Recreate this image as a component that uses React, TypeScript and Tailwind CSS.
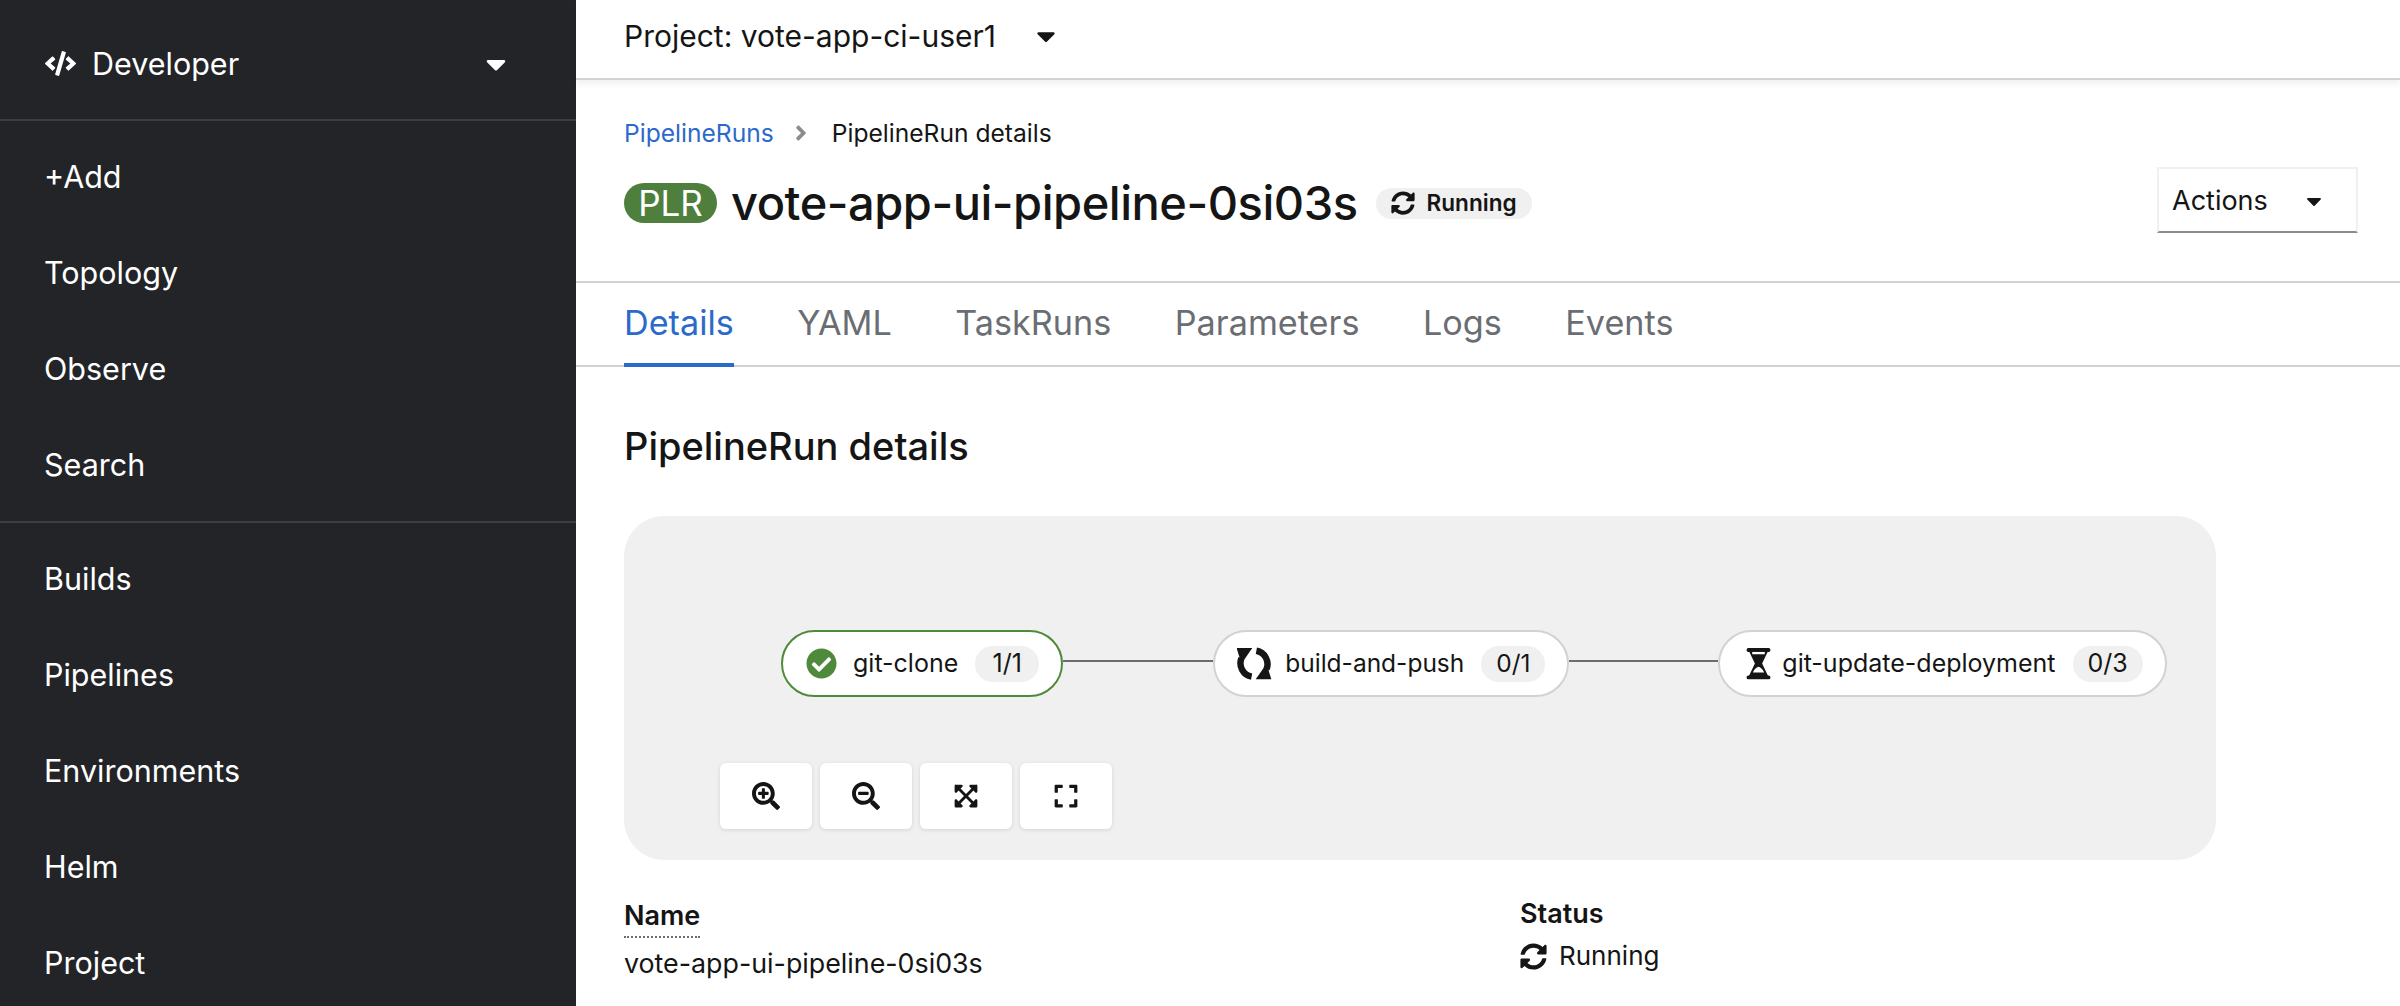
import React from "react";
import {
  FaCaretDown,
  FaAngleRight,
  FaCode,
  FaCheckCircle,
  FaSyncAlt,
  FaSearchPlus,
  FaSearchMinus,
  FaExpandArrowsAlt,
  FaExpand,
} from "react-icons/fa";

const navTop = ["+Add", "Topology", "Observe", "Search"];
const navBottom = ["Builds", "Pipelines", "Environments", "Helm", "Project"];
const tabs = ["Details", "YAML", "TaskRuns", "Parameters", "Logs", "Events"];

function SyncIcon() {
  return (
    <svg viewBox="17 25 103 93" className="h-[33px] w-[35px]" fill="#151515">
      <path d="M60 110A40 40 0 0 1 30 56" fill="none" stroke="#151515" strokeWidth="19" />
      <polygon points="16,26 62,26 30,72" />
      <path d="M74 34A40 40 0 0 1 104 88" fill="none" stroke="#151515" strokeWidth="19" />
      <polygon points="118,118 72,118 104,72" />
    </svg>
  );
}

function HourglassIcon() {
  return (
    <svg viewBox="30 22 78 100" className="h-[33px] w-[27px]">
      <rect x="33" y="25" width="72" height="12" rx="5" fill="#151515" />
      <rect x="33" y="108" width="72" height="12" rx="5" fill="#151515" />
      <polygon points="40,34 98,34 80,72 98,110 40,110 58,72" fill="#151515" />
      <rect x="50" y="37" width="38" height="7" fill="#fff" />
      <path d="M52 99C56 90 62 84 69 82C76 84 82 90 86 99Z" fill="#fff" />
    </svg>
  );
}

function Sidebar() {
  return (
    <aside className="w-[576px] shrink-0 bg-[#232428] text-white text-[30.5px]">
      <div className="flex h-[121px] items-center justify-between border-b-2 border-[#3c3f42] pl-[45px] pr-[64px] pt-[8px]">
        <div className="flex items-center gap-[16px]">
          <FaCode className="w-[31px] h-[31px]" />
          <span>Developer</span>
        </div>
        <FaCaretDown className="w-[32px] h-[32px]" />
      </div>
      <div className="border-b-2 border-[#3c3f42] pt-[8px] pb-[8px]">
        {navTop.map((n) => (
          <div key={n} className="flex h-[96px] items-center pl-[44px]">
            {n}
          </div>
        ))}
      </div>
      <div className="pt-[8px]">
        {navBottom.map((n) => (
          <div key={n} className="flex h-[96px] items-center pl-[44px]">
            {n}
          </div>
        ))}
      </div>
    </aside>
  );
}

function PipelineNode({
  icon,
  label,
  count,
  done,
  iconClass,
  badgeClass,
  textClass,
}: {
  icon: React.ReactNode;
  label: string;
  count: string;
  done?: boolean;
  iconClass: string;
  badgeClass: string;
  textClass: string;
}) {
  return (
    <div
      className={[
        "flex h-[67px] items-center rounded-full border-2 bg-white pr-[22px] text-[#151515]",
        done ? "border-[#4f8a3c]" : "border-[#d2d2d2]",
        textClass,
      ].join(" ")}
    >
      <div className={["flex items-center", iconClass].join(" ")}>
        {icon}
        <span>{label}</span>
      </div>
      <span
        className={[
          "ml-[17px] flex h-[36px] items-center justify-center rounded-full bg-[#f0f0f0]",
          badgeClass,
        ].join(" ")}
      >
        {count}
      </span>
    </div>
  );
}

function ZoomButton({ children }: { children: React.ReactNode }) {
  return (
    <div className="flex h-[66px] w-[92px] items-center justify-center rounded-[6px] bg-white text-[#151515] shadow-[0_1px_4px_rgba(3,3,3,0.12)]">
      {children}
    </div>
  );
}

export default function App() {
  return (
    <div className="flex h-[1006px] w-[2400px] overflow-hidden bg-white font-['Inter',sans-serif] text-[#151515]">
      <Sidebar />
      <main className="flex-1">
        <div className="flex h-[80px] items-center border-b-2 border-[#d2d2d2] pb-[6px] pl-[48px] shadow-[0_4px_6px_rgba(3,3,3,0.06)] text-[30px]">
          <span>Project: vote-app-ci-user1</span>
          <FaCaretDown className="ml-[35px] w-[30px] h-[30px]" />
        </div>

        <div className="h-[203px] border-b-2 border-[#d2d2d2] pl-[48px] pr-[42px] pt-[38px]">
          <div className="flex items-center text-[24.6px] leading-[30px]">
            <span className="text-[#2b6acb]">PipelineRuns</span>
            <FaAngleRight className="mx-[15px] w-[24px] h-[24px] text-[#8a8d90]" />
            <span className="ml-[4px]">PipelineRun details</span>
          </div>
          <div className="mt-[20px] flex items-start justify-between">
            <div className="flex items-center pt-[7px]">
              <span className="flex h-[40px] w-[93px] items-center justify-center rounded-full bg-[#4f7f3c] text-[35px] leading-none text-white">
                PLR
              </span>
              <span className="ml-[14px] text-[47px] font-medium leading-[56px] tracking-[-0.01em]">
                vote-app-ui-pipeline-0si03s
              </span>
              <span className="ml-[18px] flex h-[31px] items-center rounded-full bg-[#f0f0f0] pl-[15px] pr-[15px] text-[22.6px] font-semibold">
                <FaSyncAlt className="mr-[12px] w-[24px] h-[24px]" />
                Running
              </span>
            </div>
            <div className="-mt-[1px] flex h-[66px] w-[201px] items-center border-2 border-[#f0f0f0] border-b-[#8a8d90] pl-[13px] pt-[2px] text-[27px]">
              Actions
              <FaCaretDown className="ml-[34px] w-[24px] h-[24px]" />
            </div>
          </div>
        </div>

        <div className="flex h-[84px] gap-[63.5px] border-b-2 border-[#d2d2d2] pl-[48px] text-[34.2px] text-[#6a6e73]">
          {tabs.map((t, i) => (
            <div
              key={t}
              className={[
                "flex items-center border-b-4 -mb-[2px]",
                i === 0 ? "border-[#2b6acb] text-[#2b6acb]" : "border-transparent",
              ].join(" ")}
            >
              {t}
            </div>
          ))}
        </div>

        <div className="pl-[48px]">
          <h2 className="pt-[54px] text-[38px] font-medium leading-[50px]">PipelineRun details</h2>

          <div className="mt-[45px] h-[344px] w-[1592px] rounded-[40px] bg-[#f0f0f0] pl-[96px] pt-[114px]">
            <div className="ml-[61px] flex items-start">
              <PipelineNode
                done
                iconClass="pl-[23px] gap-[16px]"
                badgeClass="w-[64px]"
                textClass="text-[25px]"
                icon={<FaCheckCircle className="w-[31px] h-[31px] text-[#4f8a3c]" />}
                label="git-clone"
                count="1/1"
              />
              <div className="mt-[30px] h-[2px] w-[150px] bg-[#6a6e73]" />
              <PipelineNode
                iconClass="pl-[22px] gap-[13px]"
                badgeClass="w-[64px]"
                textClass="text-[24.5px]"
                icon={<SyncIcon />}
                label="build-and-push"
                count="0/1"
              />
              <div className="mt-[30px] h-[2px] w-[149px] bg-[#6a6e73]" />
              <PipelineNode
                iconClass="pl-[25px] gap-[10px]"
                badgeClass="w-[70px]"
                textClass="text-[25px]"
                icon={<HourglassIcon />}
                label="git-update-deployment"
                count="0/3"
              />
            </div>
            <div className="mt-[66px] flex gap-[8px]">
              <ZoomButton><FaSearchPlus className="w-[28px] h-[28px]" /></ZoomButton>
              <ZoomButton><FaSearchMinus className="w-[28px] h-[28px]" /></ZoomButton>
              <ZoomButton><FaExpandArrowsAlt className="w-[26px] h-[26px]" /></ZoomButton>
              <ZoomButton><FaExpand className="w-[26px] h-[26px]" /></ZoomButton>
            </div>
          </div>

          <div className="mt-[38px] flex text-[26px]">
            <div className="w-[896px]">
              <div className="flex flex-col items-start text-[27px] font-semibold leading-[36px]">
                <span className="border-b-2 border-dotted border-[#6a6e73] pb-[2px]">Name</span>
              </div>
              <div className="mt-[7px] text-[26.8px] leading-[36px]">vote-app-ui-pipeline-0si03s</div>
            </div>
            <div>
              <div className="text-[27px] font-semibold leading-[32px]">Status</div>
              <div className="mt-[8px] flex items-center leading-[36px]">
                <FaSyncAlt className="mr-[12px] w-[27px] h-[27px]" />
                Running
              </div>
            </div>
          </div>
        </div>
      </main>
    </div>
  );
}
